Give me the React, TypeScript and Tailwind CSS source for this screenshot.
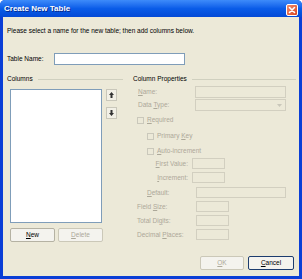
import React from "react";

const U = ({ children }: { children: React.ReactNode }) => <span className="underline underline-offset-[1px]">{children}</span>;

const Checkbox = ({ children, indent }: { children: React.ReactNode; indent?: boolean }) => (
  <div className={`flex items-center h-[10px] ${indent ? "ml-[14px]" : "ml-[4px]"}`}>
    <div className="w-[7px] h-[7px] border border-[#CAC8BB] bg-[#ECE9D8]" />
    <span className="ml-[3px] text-[#ACA899]">{children}</span>
  </div>
);

const DisabledBox = ({ w }: { w: string }) => <div className={`${w} h-full border border-[#D2CFC0] bg-[#ECE9D8]`} />;

export default function App() {
  return (
    <div
      className="w-[302px] h-[279px] flex flex-col bg-[#0A3ED6] rounded-t-[5px] overflow-hidden text-[6.5px] leading-[10px] text-black"
      style={{ fontFamily: '"Liberation Sans", Arial, sans-serif' }}
    >
      {/* Title bar */}
      <div className="h-[17px] flex items-center justify-between pl-[4px] pr-[4px] bg-gradient-to-b from-[#3D8BFA] via-[#0A5CE8] to-[#0349D6]">
        <span className="text-white font-bold text-[8px] mt-[1px]" style={{ textShadow: "1px 1px 0 #0A2A8A" }}>Create New Table</span>
        <div className="w-[12px] h-[12px] mt-[2px] rounded-[2px] border border-white bg-gradient-to-br from-[#F08A6A] to-[#D8431B] flex items-center justify-center">
          <svg width="8" height="8" viewBox="0 0 8 8">
            <path d="M1.5 1.5 L6.5 6.5 M6.5 1.5 L1.5 6.5" stroke="white" strokeWidth="1.6" strokeLinecap="round" />
          </svg>
        </div>
      </div>

      {/* Content */}
      <div className="flex-1 mx-[3px] mb-[3px] bg-[#ECE9D8] flex flex-col pl-[4px]">
        <div className="mt-[9px]">Please select a name for the new table; then add columns below.</div>

        <div className="mt-[17px] h-[12px] flex items-center">
          <span className="w-[47px]">Table Name:</span>
          <div className="w-[131px] h-full border border-[#7F9DB9] bg-white" />
        </div>

        <div className="mt-[9px] flex">
          {/* Left: Columns */}
          <div className="w-[118px] flex flex-col">
            <div className="flex items-center h-[10px]">
              <span>Columns</span>
              <div className="flex-1 ml-[5px] mr-[2px] h-px bg-[#D0D0BF]" />
            </div>
            <div className="flex mt-[5px] ml-[3px]">
              <div className="w-[92px] h-[134px] border border-[#7F9DB9] bg-white" />
              <div className="ml-[4px] flex flex-col gap-[6px]">
                <div className="w-[11px] h-[12px] border border-[#C9C7BA] bg-[#F2F0E6] flex items-center justify-center">
                  <svg width="5" height="6" viewBox="0 0 5 6"><path d="M2.5 0 L5 3 L3.5 3 L3.5 6 L1.5 6 L1.5 3 L0 3 Z" fill="#333" /></svg>
                </div>
                <div className="w-[11px] h-[12px] border border-[#C9C7BA] bg-[#F2F0E6] flex items-center justify-center">
                  <svg width="5" height="6" viewBox="0 0 5 6"><path d="M2.5 6 L5 3 L3.5 3 L3.5 0 L1.5 0 L1.5 3 L0 3 Z" fill="#333" /></svg>
                </div>
              </div>
            </div>
            <div className="flex mt-[5px] ml-[3px] gap-[3px]">
              <div className="w-[45px] h-[14px] border border-[#B5B2A3] rounded-[2px] bg-[#F4F3EE] flex items-center justify-center">
                <U>N</U>ew
              </div>
              <div className="w-[45px] h-[14px] border border-[#CBC8B8] rounded-[2px] bg-[#F4F3EE] flex items-center justify-center text-[#ACA899]">
                <U>D</U>elete
              </div>
            </div>
          </div>

          {/* Right: Column Properties */}
          <div className="ml-[8px] w-[163px] flex flex-col">
            <div className="flex items-center h-[10px]">
              <span>Column Properties</span>
              <div className="flex-1 ml-[5px] h-px bg-[#D0D0BF]" />
            </div>
            <div className="mt-[2px] h-[12px] flex items-center">
              <span className="w-[62px] pl-[5px] text-[#ACA899]"><U>N</U>ame:</span>
              <DisabledBox w="w-[91px]" />
            </div>
            <div className="mt-[1px] h-[12px] flex items-center">
              <span className="w-[62px] pl-[5px] text-[#ACA899]">Data <U>T</U>ype:</span>
              <div className="w-[91px] h-full border border-[#D2CFC0] bg-[#ECE9D8] flex items-center justify-end pr-[3px]">
                <svg width="5" height="3" viewBox="0 0 5 3"><path d="M0 0 L5 0 L2.5 3 Z" fill="#C9C7BA" /></svg>
              </div>
            </div>
            <div className="mt-[4px]"><Checkbox><U>R</U>equired</Checkbox></div>
            <div className="mt-[6px]"><Checkbox indent>Primary <U>K</U>ey</Checkbox></div>
            <div className="mt-[5px]"><Checkbox indent><U>A</U>uto-increment</Checkbox></div>
            <div className="mt-[2px] h-[11px] flex items-center">
              <span className="w-[59px] text-right pr-[4px] text-[#ACA899]"><U>F</U>irst Value:</span>
              <DisabledBox w="w-[33px]" />
            </div>
            <div className="mt-[3px] h-[11px] flex items-center">
              <span className="w-[59px] text-right pr-[4px] text-[#ACA899]"><U>I</U>ncrement:</span>
              <DisabledBox w="w-[33px]" />
            </div>
            <div className="mt-[4px] h-[11px] flex items-center">
              <span className="w-[63px] pl-[14px] text-[#ACA899]"><U>D</U>efault:</span>
              <DisabledBox w="w-[90px]" />
            </div>
            <div className="mt-[3px] h-[11px] flex items-center">
              <span className="w-[63px] pl-[4px] text-[#ACA899]">Field <U>S</U>ize:</span>
              <DisabledBox w="w-[33px]" />
            </div>
            <div className="mt-[3px] h-[11px] flex items-center">
              <span className="w-[63px] pl-[4px] text-[#ACA899]">Total Di<U>g</U>its:</span>
              <DisabledBox w="w-[33px]" />
            </div>
            <div className="mt-[3px] h-[11px] flex items-center">
              <span className="w-[63px] pl-[4px] text-[#ACA899]">Decimal <U>P</U>laces:</span>
              <DisabledBox w="w-[33px]" />
            </div>
          </div>
        </div>

        <div className="mt-[14px] flex justify-end gap-[4px] mr-[5px]">
          <div className="w-[44px] h-[14px] border border-[#CBC8B8] rounded-[2px] bg-[#F4F3EE] flex items-center justify-center text-[#ACA899]">
            <U>O</U>K
          </div>
          <div className="w-[46px] h-[14px] border border-[#1C3C6E] rounded-[2px] bg-[#F4F3EE] flex items-center justify-center">
            <U>C</U>ancel
          </div>
        </div>
      </div>
    </div>
  );
}
